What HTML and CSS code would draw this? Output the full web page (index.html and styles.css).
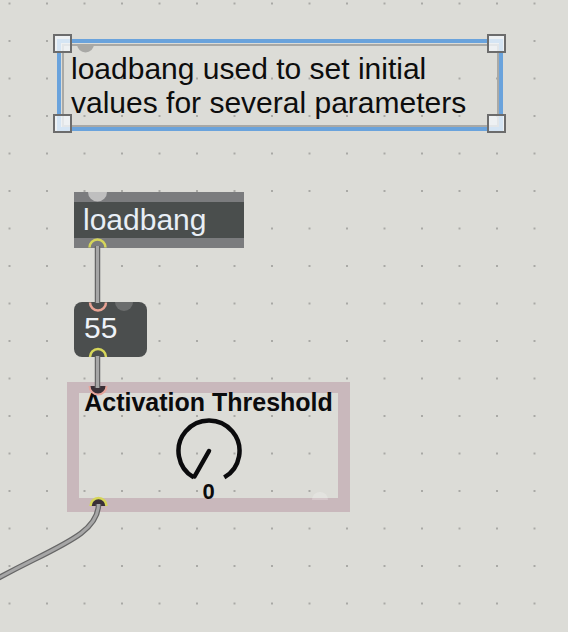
FILE: index.html
```html
<!DOCTYPE html>
<html>
<head>
<meta charset="utf-8">
<link rel="stylesheet" href="styles.css">
</head>
<body>
<div class="canvas">
  <div class="comment">loadbang used to set initial<br>values for several parameters</div>
  <div class="selection"></div>
  <div class="handle h-tl"></div>
  <div class="handle h-tr"></div>
  <div class="handle h-bl"></div>
  <div class="handle h-br"></div>

  <div class="object loadbang">loadbang</div>
  <div class="number">55</div>

  <div class="dial">
    <div class="dial-label">Activation Threshold</div>
    <svg class="knob" width="66" height="66" viewBox="0 0 66 66">
      <path d="M17.75 59.41 A30.5 30.5 0 1 1 48.25 59.41" fill="none" stroke="#0b0b0d" stroke-width="4.5"/>
      <line x1="33" y1="33" x2="18.5" y2="58.5" stroke="#0b0b0d" stroke-width="4.5" stroke-linecap="round"/>
    </svg>
    <div class="dial-value">0</div>
  </div>

  <svg class="wires" width="568" height="632" viewBox="0 0 568 632">
    <path d="M77 44 A8.5 8.5 0 0 0 94 44 Z" fill="#a8a8a5"/>
    <path d="M88 192 A9.5 9.5 0 0 0 107 192 Z" fill="#bfbfbf"/>
    <path d="M115 302 A9 9 0 0 0 133 302 Z" fill="#6b6d6d"/>
    <path d="M89.5 386 A8.5 8.5 0 0 0 106.5 386 Z" fill="#3a3037"/>
    <path d="M90.5 506 A8 8 0 0 1 106.5 506 Z" fill="#3a3037"/>
    <path d="M312 500 A8 8 0 0 1 328 500 Z" fill="#ffffff" fill-opacity="0.22"/>

    <g fill="none" stroke-linecap="butt">
      <path d="M97.5 246 L97.5 303" stroke="#666666" stroke-width="5.5"/>
      <path d="M97.5 246 L97.5 303" stroke="#a6a6a6" stroke-width="3"/>
      <path d="M97.5 356 L97.5 388" stroke="#666666" stroke-width="5.5"/>
      <path d="M97.5 356 L97.5 388" stroke="#a6a6a6" stroke-width="3"/>
      <path d="M98.5 504 C98.5 540 40 550 -40 600" stroke="#666666" stroke-width="5.5"/>
      <path d="M98.5 504 C98.5 540 40 550 -40 600" stroke="#a6a6a6" stroke-width="3"/>
    </g>

    <g fill="none" stroke-width="2.5">
      <path d="M89.5 247.5 A8 8 0 0 1 105.5 247.5" stroke="#d6d65a"/>
      <path d="M90 302.5 A8 8 0 0 0 106 302.5" stroke="#e9a394"/>
      <path d="M90 357 A8 8 0 0 1 106 357" stroke="#d6d65a"/>
      <path d="M89.5 386 A8.5 8.5 0 0 0 106.5 386" stroke="#e6a49b" stroke-width="2"/>
      <path d="M90.5 506 A8 8 0 0 1 106.5 506" stroke="#d6d65a"/>
    </g>
  </svg>
</div>
</body>
</html>
```

FILE: styles.css
```css
html, body {
  margin: 0;
  padding: 0;
  background: #dcdcd7;
}

.canvas {
  position: relative;
  width: 568px;
  height: 632px;
  overflow: hidden;
  background-color: #dcdcd7;
  background-image: radial-gradient(circle, #a9a9a5 0, #a9a9a5 0.9px, rgba(169,169,165,0) 1.3px);
  background-size: 37.5px 37.5px;
  background-position: -9.25px -15.25px;
  font-family: "Liberation Sans", Arial, sans-serif;
}

.comment {
  position: absolute;
  left: 62px;
  top: 44px;
  width: 437px;
  height: 83px;
  box-sizing: border-box;
  border: 2px solid #a9a9a6;
  padding: 6px 0 0 7px;
  font-size: 30px;
  line-height: 34px;
  color: #0d0d0d;
  white-space: nowrap;
}

.selection {
  position: absolute;
  left: 57px;
  top: 39px;
  width: 446px;
  height: 92px;
  box-sizing: border-box;
  border: 4px solid #6aa3dc;
}

.handle {
  position: absolute;
  width: 19px;
  height: 19px;
  box-sizing: border-box;
  border: 2px solid #6c6c6c;
  background: rgba(244, 247, 251, 0.78);
}
.h-tl { left: 53px; top: 34px; }
.h-tr { left: 487px; top: 34px; }
.h-bl { left: 53px; top: 114px; }
.h-br { left: 487px; top: 114px; }

.object {
  position: absolute;
  box-sizing: border-box;
  white-space: nowrap;
}

.loadbang {
  left: 74px;
  top: 192px;
  width: 170px;
  height: 56px;
  background: #4a4e4d;
  border-top: 10px solid #7b7c7e;
  border-bottom: 10px solid #7b7c7e;
  padding-left: 9px;
  font-size: 30px;
  line-height: 36px;
  color: #e8eef6;
}

.number {
  position: absolute;
  left: 74px;
  top: 302px;
  width: 73px;
  height: 55px;
  box-sizing: border-box;
  border-radius: 8px;
  background: #4b4e4e;
  padding: 9px 0 0 10px;
  font-size: 30px;
  line-height: 34px;
  color: #eef2f7;
}

.dial {
  position: absolute;
  left: 67px;
  top: 382px;
  width: 283px;
  height: 130px;
  box-sizing: border-box;
  border-style: solid;
  border-color: #c9b8bc;
  border-width: 11px 12px 14px 12px;
  display: flex;
  flex-direction: column;
  align-items: center;
}

.dial > * {
  flex-shrink: 0;
}

.dial-label {
  margin-top: -5px;
  font-size: 25px;
  font-weight: bold;
  line-height: 28px;
  color: #0b0b0d;
  white-space: nowrap;
}

.knob {
  display: block;
  margin-top: 1.5px;
  margin-left: 1px;
}

.dial-value {
  margin-top: -2px;
  font-size: 22px;
  font-weight: bold;
  line-height: 20px;
  color: #0b0b0d;
}

.wires {
  position: absolute;
  left: 0;
  top: 0;
  pointer-events: none;
}
```
